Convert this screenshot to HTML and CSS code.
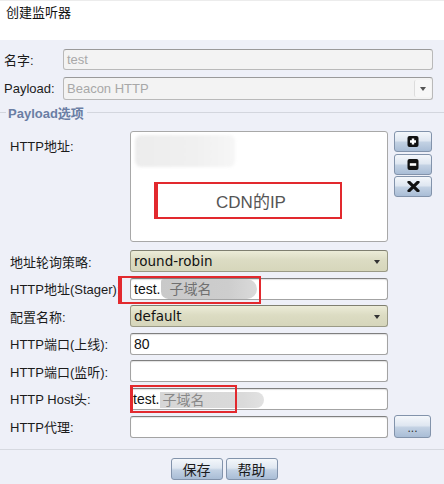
FILE: index.html
```html
<!DOCTYPE html>
<html lang="zh-CN">
<head>
<meta charset="utf-8">
<title>创建监听器</title>
<link rel="stylesheet" href="styles.css">
</head>
<body>
<div class="titlebar">创建监听器</div>
<div class="dialog">
  <div class="top-form">
    <span class="lbl">名字:</span>
    <div class="field input disabled h21">test</div>
    <span class="lbl">Payload:</span>
    <div class="field select disabled h23"><span class="val">Beacon HTTP</span><span class="arrow"></span></div>
  </div>

  <div class="legend"><span class="legend-text">Payload选项</span></div>

  <div class="opts">
    <span class="lbl lbl-top">HTTP地址:</span>
    <div class="textarea">
      <div class="smudge"></div>
      <div class="callout">CDN的IP</div>
    </div>
    <div class="tools">
      <button class="btn tool"><svg width="12" height="11" viewBox="0 0 12 11"><rect x="0.5" y="0" width="11" height="11" rx="2" fill="#111"/><path d="M6 2.5v6M3 5.5h6" stroke="#fff" stroke-width="2.4"/></svg></button>
      <button class="btn tool"><svg width="12" height="11" viewBox="0 0 12 11"><rect x="0.5" y="0" width="11" height="11" rx="2" fill="#111"/><path d="M2.8 5.5h6.4" stroke="#fff" stroke-width="2.6"/></svg></button>
      <button class="btn tool"><svg width="13" height="11" viewBox="0 0 13 11"><path d="M2 1.2l9 8.6M11 1.2l-9 8.6" stroke="#111" stroke-width="3.2" stroke-linecap="round"/></svg></button>
    </div>

    <span class="lbl">地址轮询策略:</span>
    <div class="field select olive"><span class="val">round-robin</span><span class="arrow"></span></div>

    <span class="lbl">HTTP地址(Stager):</span>
    <div class="field input marked">
      <span class="val">test.</span><span class="blob">子域名</span>
      <span class="redbox redbox-stager"></span>
    </div>

    <span class="lbl">配置名称:</span>
    <div class="field select olive"><span class="val">default</span><span class="arrow"></span></div>

    <span class="lbl">HTTP端口(上线):</span>
    <div class="field input"><span class="val">80</span></div>

    <span class="lbl">HTTP端口(监听):</span>
    <div class="field input"></div>

    <span class="lbl">HTTP Host头:</span>
    <div class="field input marked">
      <span class="val host">test.</span><span class="blob blob-host">子域名</span>
      <span class="redbox redbox-host"></span>
    </div>

    <span class="lbl">HTTP代理:</span>
    <div class="field input"></div>
    <button class="btn dots">...</button>
  </div>

  <div class="footer">
    <button class="btn action">保存</button>
    <button class="btn action">帮助</button>
  </div>
</div>
</body>
</html>
```

FILE: styles.css
```css
* { box-sizing: border-box; }

html, body {
  margin: 0;
  padding: 0;
}

body {
  width: 444px;
  height: 484px;
  overflow: hidden;
  font: 13px "Liberation Sans", "Noto Sans CJK SC", sans-serif;
  color: #1b1b1b;
  background: #eef0f8;
}

.titlebar {
  height: 40px;
  background: #fff;
  border-top: 1px solid #ececec;
  padding: 4px 0 0 6px;
  line-height: 16px;
  color: #111;
}

.dialog {
  display: flex;
  flex-direction: column;
}

.top-form {
  display: grid;
  grid-template-columns: 59px 370px;
  row-gap: 7px;
  padding: 9px 0 0 4px;
  align-items: center;
}

.lbl {
  grid-column: 1;
  white-space: nowrap;
  color: #1b1b1b;
}

.lbl-top {
  align-self: start;
  padding-top: 5px;
}

.field {
  grid-column: 2;
  position: relative;
  display: flex;
  align-items: center;
  height: 22px;
  border: 1px solid #a3a3a3;
  border-top-color: #7f7f7f;
  border-radius: 3px;
  background: #fff;
  box-shadow: inset 0 1px 1px rgba(0, 0, 0, 0.12);
  padding-left: 3px;
}

.h21 { height: 21px; }
.h23 { height: 23px; }

.field.disabled {
  background: #f3f3f3;
  border-color: #b9b9b9;
  border-top-color: #9a9a9a;
  color: #a8a8a8;
  box-shadow: none;
}

.select .val { flex: 1; }

.arrow {
  position: relative;
  width: 17px;
  height: 17px;
  margin-right: 1px;
  border-left: 1px solid #dcdcdc;
  border-radius: 2px;
  background: #f7f7f7;
}

.arrow::after {
  content: "";
  position: absolute;
  left: 5px;
  top: 7px;
  border-left: 3.5px solid transparent;
  border-right: 3.5px solid transparent;
  border-top: 4px solid #555;
}

.field.olive {
  border-color: #9a9a86;
  border-top-color: #7f7f70;
  background: linear-gradient(#ececd8, #dcdcc3 45%, #d6d6bb);
  box-shadow: none;
}

.olive .val {
  font-family: "DejaVu Sans", "Noto Sans CJK SC", sans-serif;
  font-size: 13.5px;
  color: #161616;
}

.olive .arrow {
  background: transparent;
  border-left: none;
}

.olive .arrow::after {
  border-top-color: #333;
}

.legend {
  display: flex;
  align-items: center;
  height: 16px;
  margin-top: 4px;
}

.legend::before {
  content: "";
  width: 6px;
  border-top: 1px solid #d3d6de;
}

.legend::after {
  content: "";
  flex: 1;
  border-top: 1px solid #d3d6de;
  margin-left: 3px;
}

.legend-text {
  font-weight: bold;
  color: #6a7ea4;
  padding-left: 2px;
}

.opts {
  display: grid;
  grid-template-columns: 114px 258px 38px;
  column-gap: 6px;
  row-gap: 5.5px;
  padding-left: 10px;
  margin-top: 11px;
  align-items: center;
}

.opts .field .val {
  font-size: 14px;
  color: #111;
}

.opts .olive .val { font-size: 13.5px; }

.textarea {
  grid-column: 2;
  height: 111px;
  margin-bottom: 2.5px;
  border: 1px solid #a8a8a8;
  border-radius: 3px;
  background: #fff;
  padding: 3px 0 0 4px;
  display: flex;
  flex-direction: column;
  align-items: flex-start;
}

.smudge {
  width: 100px;
  height: 32px;
  border-radius: 6px;
  background: linear-gradient(90deg, #ececec, #f0f0f0 60%, #f6f6f6);
  filter: blur(1.5px);
}

.callout {
  margin: 15px 0 0 19px;
  width: 188px;
  height: 37px;
  border: 2px solid #e2292e;
  border-left-width: 4px;
  display: flex;
  align-items: center;
  justify-content: center;
  font-size: 17px;
  color: #555;
  padding-left: 4px;
}

.tools {
  grid-column: 3;
  align-self: start;
  display: flex;
  flex-direction: column;
  gap: 1.5px;
}

.btn {
  font: inherit;
  margin: 0;
  padding: 0;
  border: 1px solid #8293ab;
  border-radius: 3px;
  background: linear-gradient(#f4f7fb, #dfe7f1 45%, #c2d1e3 55%, #a9bdd6);
  color: #1b1b1b;
  display: flex;
  align-items: center;
  justify-content: center;
}

.tool {
  width: 38px;
  height: 21px;
}

.blob {
  font-size: 14px;
  color: #707070;
  background: linear-gradient(90deg, #c9c9c9, #cdcdcd 70%, #dadada);
  border-radius: 3px 11px 11px 8px;
  padding: 0 46px 0 8px;
  height: 20px;
  line-height: 20px;
  margin-left: 1px;
}

.opts .field .val.host { margin-left: -1px; }

.blob-host {
  color: #888;
  background: linear-gradient(90deg, #d6d6d6, #dadada 80%, #e2e2e2);
  border-radius: 0 8px 8px 0;
  padding: 0 60px 0 2px;
  height: 16px;
  line-height: 16px;
  margin-top: 2px;
}

.redbox {
  position: absolute;
  border: 2px solid #e2292e;
  pointer-events: none;
}

.redbox-stager {
  left: -13px;
  top: -3px;
  width: 143px;
  height: 28px;
  border-left-width: 4px;
}

.redbox-host {
  left: -1px;
  top: -4px;
  width: 107px;
  height: 28px;
  border-left-width: 3px;
}

.dots {
  grid-column: 3;
  width: 37px;
  height: 23px;
  align-items: flex-end;
  padding-bottom: 3px;
  font-size: 12px;
  line-height: 12px;
  color: #333;
}

.footer {
  margin-top: 11px;
  border-top: 1px solid #d6d9e0;
  padding: 8px 0 0 4px;
  display: flex;
  justify-content: center;
  gap: 3px;
}

.action {
  width: 52px;
  height: 22px;
  font-size: 14px;
  color: #1b1b1b;
}
```
